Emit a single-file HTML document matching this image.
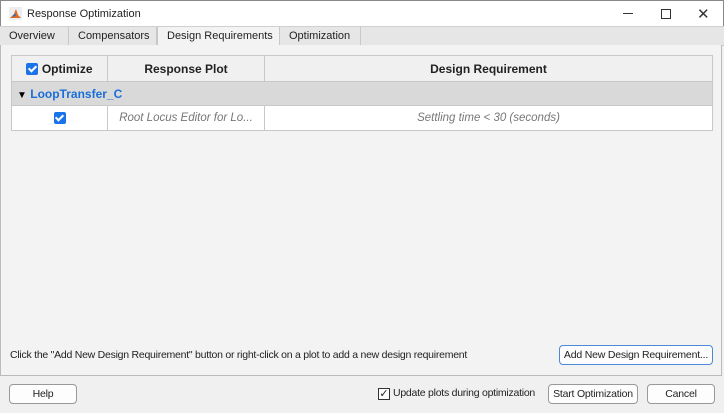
<!DOCTYPE html>
<html><head><style>
*{box-sizing:border-box;margin:0;padding:0}
body{width:724px;height:413px;background:#f0f0f0;font-family:"Liberation Sans",Arial,sans-serif;font-size:10.5px;color:#222;position:relative;overflow:hidden;white-space:nowrap}
.abs{position:absolute}
.title{left:0;top:0;width:724px;height:26px;background:#fff;border:1px solid #888;border-bottom:none}
.tabs{left:0;top:26px;width:724px;height:20px;background:#e6e6e6;border-top:1px solid #d0d0d0;border-bottom:1px solid #c8c8c8}
.tab{position:absolute;top:0;height:19px;line-height:19px;border-right:1px solid #c8c8c8;padding-left:9px;color:#222;font-size:11px}
.panel{left:0;top:45px;width:722px;height:331px;background:#f3f3f3;border:1px solid #bbb;border-top:none}
table{position:absolute;left:11px;top:55px;width:702px;border-collapse:collapse;background:#fff}
td{border:1px solid #c8c8c8;height:25px;text-align:center}
.hd td{background:#f0f0f0;font-weight:bold;font-size:12px;height:26px}
.grp td{background:#d9d9d9;text-align:left;color:#1a6ed8;font-weight:bold;font-size:12px;height:24px;padding-left:5px}
.it{font-style:italic;color:#777;font-size:11.5px}
.cb{display:inline-block;width:12px;height:12px;background:#1a73e8;border-radius:2px;vertical-align:-2px;position:relative}
.cb:after{content:"";position:absolute;left:3.5px;top:1px;width:3px;height:6px;border:solid #fff;border-width:0 2px 2px 0;transform:rotate(45deg)}
.btn{position:absolute;height:20px;border:1px solid #999;border-radius:4px;background:#fdfdfd;text-align:center;line-height:18px;font-size:10.5px;letter-spacing:-0.2px}
</style></head><body>
<div class="abs title">
 <svg class="abs" style="left:8px;top:6px" width="13" height="13"><rect width="13" height="13" fill="#eee"/><path d="M1 11 L5 7 L7 2 L9 8 L12 11 Z" fill="#e06a20"/><path d="M3 10 L6 6 L7 9Z" fill="#3070c0"/></svg>
 <div class="abs" style="left:26px;top:7px;font-size:11px">Response Optimization</div>
 <div class="abs" style="left:622px;top:12px;width:10px;height:1px;background:#333"></div>
 <div class="abs" style="left:660px;top:8px;width:10px;height:10px;border:1px solid #333"></div>
 <div class="abs" style="left:696px;top:4px;font-size:15px;color:#333">✕</div>
</div>
<div class="abs tabs">
 <div class="tab" style="left:0;width:69px">Overview</div>
 <div class="tab" style="left:69px;width:88px">Compensators</div>
 <div class="tab" style="left:157px;width:123px;background:#f3f3f3;height:20px;border-left:1px solid #c8c8c8">Design Requirements</div>
 <div class="tab" style="left:280px;width:81px">Optimization</div>
</div>
<div class="abs panel"></div>
<table>
<tr class="hd"><td style="width:96px"><span class="cb"></span> Optimize</td><td style="width:157px">Response Plot</td><td>Design Requirement</td></tr>
<tr class="grp"><td colspan="3"><span style="color:#000;font-size:10px">▼</span> LoopTransfer_C</td></tr>
<tr><td><span class="cb"></span></td><td class="it">Root Locus Editor for Lo...</td><td class="it">Settling time &lt; 30 (seconds)</td></tr>
</table>
<div class="abs" style="left:10px;top:349px;letter-spacing:-0.25px">Click the "Add New Design Requirement" button or right-click on a plot to add a new design requirement</div>
<div class="btn" style="left:559px;top:345px;width:154px;border-color:#4a8ad8">Add New Design Requirement...</div>
<div class="btn" style="left:9px;top:384px;width:68px">Help</div>
<div class="abs" style="left:378px;top:388px;width:12px;height:12px;border:1px solid #333;background:#fff;font-size:11px;line-height:10px;text-align:center">✓</div>
<div class="abs" style="left:393px;top:387px;letter-spacing:-0.25px">Update plots during optimization</div>
<div class="btn" style="left:548px;top:384px;width:90px">Start Optimization</div>
<div class="btn" style="left:647px;top:384px;width:68px">Cancel</div>
</body></html>
